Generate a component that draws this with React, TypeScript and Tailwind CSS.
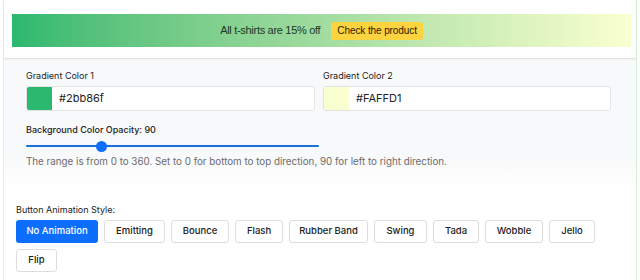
import React from "react";

const buttons: { label: string; w: string }[] = [
  { label: "No Animation", w: "w-[82px]" },
  { label: "Emitting", w: "w-[61px]" },
  { label: "Bounce", w: "w-[58px]" },
  { label: "Flash", w: "w-[48px]" },
  { label: "Rubber Band", w: "w-[79px]" },
  { label: "Swing", w: "w-[53px]" },
  { label: "Tada", w: "w-[46px]" },
  { label: "Wobble", w: "w-[58px]" },
  { label: "Jello", w: "w-[46px]" },
  { label: "Flip", w: "w-[41px]" },
];

export default function App() {
  return (
    <div
      className="w-[640px] h-[280px] bg-white overflow-hidden"
      style={{ fontFamily: "Inter, 'Liberation Sans', sans-serif" }}
    >
      <div className="ml-[3px] w-[634px] h-full border-l border-[#ececec] border-r border-r-[#d4f2d2] flex flex-col">
        {/* top card */}
        <div className="h-[58px] pt-[14px] pl-[8px] pr-[5px] bg-white shadow-[0_1px_2px_rgba(0,0,0,0.08)] relative z-10">
          <div
            className="h-[33px] flex items-center justify-center gap-[11px] bg-gradient-to-r from-[#2bb86f] to-[#FAFFD1]"
            style={{ fontFamily: "'Liberation Sans', Arial, sans-serif" }}
          >
            <span className="text-[11px] text-[#183a26] tracking-[-0.3px]">
              All t-shirts are 15% off
            </span>
            <span className="h-[18px] px-[6px] flex items-center rounded-[3px] bg-[#fdd33f] text-[10px] text-[#2a2100] tracking-[-0.1px]">
              Check the product
            </span>
          </div>
        </div>

        {/* settings panel */}
        <div className="bg-gradient-to-b from-[#f8f9fa] from-75% to-white px-[22px] pt-[11px] pb-[20px] border-t border-[#eeeeee]">
          <div className="flex gap-[8px]">
            <div className="w-[289px]">
              <div className="text-[9px] text-[#222] leading-[12px]">Gradient Color 1</div>
              <div className="mt-[4px] h-[25px] flex border border-[#e2e2e2] rounded-[3px] bg-white overflow-hidden">
                <div className="w-[25px] h-full bg-[#2bb86f]" />
                <div className="pl-[7px] flex items-center text-[11px] text-[#222]">#2bb86f</div>
              </div>
            </div>
            <div className="w-[288px]">
              <div className="text-[9px] text-[#222] leading-[12px]">Gradient Color 2</div>
              <div className="mt-[4px] h-[25px] flex border border-[#e2e2e2] rounded-[3px] bg-white overflow-hidden">
                <div className="w-[25px] h-full bg-[#FAFFD1]" />
                <div className="pl-[7px] flex items-center text-[11px] text-[#222]">#FAFFD1</div>
              </div>
            </div>
          </div>

          <div className="mt-[13px] text-[9px] text-[#222] leading-[12px] font-medium">
            Background Color Opacity: 90
          </div>
          <div className="mt-[4px] w-[293px] h-[12px] flex items-center relative">
            <div className="w-full h-[2px] bg-[#1a6fd8] rounded" />
            <div className="absolute left-[70px] w-[11px] h-[11px] rounded-full bg-[#0d6efd]" />
          </div>
          <div className="mt-[3px] text-[9.8px] text-[#6b6b6b] leading-[13px]">
            The range is from 0 to 360. Set to 0 for bottom to top direction, 90 for left to right direction.
          </div>
        </div>

        {/* animation style */}
        <div className="px-[12px] pt-[16px]">
          <div className="text-[9px] text-[#222] leading-[12px]">Button Animation Style:</div>
          <div className="mt-[4px] flex flex-wrap gap-x-[6px] gap-y-[6px] w-[600px]">
            {buttons.map((b, i) => (
              <div
                key={b.label}
                className={
                  i === 0
                    ? "h-[23px] w-[82px] flex items-center justify-center rounded-[3px] bg-[#0d6efd] text-white text-[9.5px] font-medium"
                    : "h-[23px] flex items-center justify-center rounded-[3px] border border-[#dedede] bg-white text-[#222] text-[9.5px] font-medium " + b.w
                }
              >
                {b.label}
              </div>
            ))}
          </div>
        </div>
      </div>
    </div>
  );
}
